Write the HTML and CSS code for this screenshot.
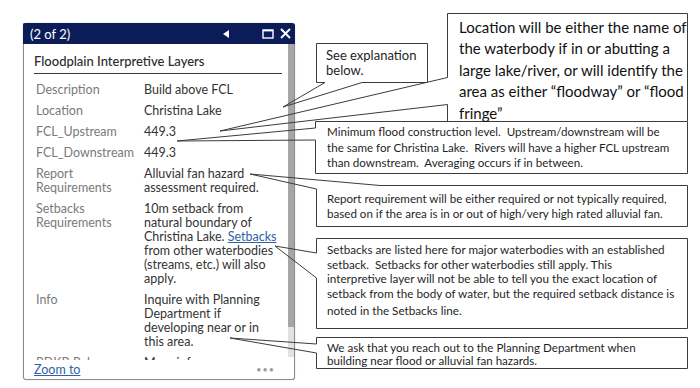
FILE: index.html
```html
<!DOCTYPE html>
<html lang="en">
<head>
<meta charset="utf-8">
<title>Floodplain Interpretive Layers</title>
<link rel="stylesheet" href="styles.css">
</head>
<body>
<div class="page">
  <div class="popup">
    <div class="pop-header">
      <span class="pop-count">(2 of 2)</span>
      <div class="pop-actions">
        <svg class="ico ico-prev" width="8" height="10" viewBox="0 0 8 10"><path d="M7 1 L1 5 L7 9 Z" fill="#fff"/></svg>
        <svg class="ico ico-max" width="12" height="10" viewBox="0 0 12 10"><rect x="1" y="1" width="10" height="8" fill="none" stroke="#fff" stroke-width="1.4"/><line x1="1" y1="1.6" x2="11" y2="1.6" stroke="#fff" stroke-width="1.6"/></svg>
        <svg class="ico ico-close" width="11" height="11" viewBox="0 0 11 11"><path d="M1 1 L10 10 M10 1 L1 10" stroke="#fff" stroke-width="1.9" fill="none"/></svg>
      </div>
    </div>
    <div class="pop-body">
      <div class="pop-scroll">
        <div class="pop-title">Floodplain Interpretive Layers</div>
        <dl class="fields">
          <dt>Description</dt><dd>Build above FCL</dd>
          <dt>Location</dt><dd>Christina Lake</dd>
          <dt>FCL_Upstream</dt><dd>449.3</dd>
          <dt>FCL_Downstream</dt><dd>449.3</dd>
          <dt>Report Requirements</dt><dd>Alluvial fan hazard assessment required.</dd>
          <dt>Setbacks Requirements</dt><dd>10m setback from natural boundary of Christina Lake. <a class="link" href="#">Setbacks</a> from other waterbodies (streams, etc.) will also apply.</dd>
          <dt>Info</dt><dd>Inquire with Planning Department if developing near or in this area.</dd>
          <dt>RDKB Rel</dt><dd>More info</dd>
        </dl>
      </div>
      <div class="scrollbar"><div class="thumb"></div><div class="track"></div></div>
    </div>
    <div class="pop-footer">
      <a class="link" href="#">Zoom to</a>
      <span class="more">&bull;&bull;&bull;</span>
    </div>
  </div>

  <div class="notes">
    <svg class="note-lines" width="700" height="388" viewBox="0 0 700 388">
      <rect x="447" y="13" width="241" height="108" fill="#fff"/>
      <path class="ln" d="M447.5,121 V104.5 L220,131 L447.5,77.5 V13.5 H687.5 V121"/>
      <rect x="316" y="43" width="112" height="40" fill="#fff"/>
      <path class="ln" d="M316.5,43.5 H427.5 V82.5 H362 L283,107 L325,82.5 H316.5 Z"/>
      <rect x="315" y="121" width="373" height="53" fill="#fff"/>
      <path class="ln" d="M315.5,128 L177,141 L315.5,140 V173.5 H687.5 V121.5 H315.5 Z"/>
      <rect x="316" y="185" width="372" height="42" fill="#fff"/>
      <path class="ln" d="M316.5,189 L250,174 L380,185.5 H687.5 V226.5 H316.5 Z"/>
      <rect x="316" y="238" width="372" height="91" fill="#fff"/>
      <path class="ln" d="M316.5,253 L275,246 L316.5,278 V328.5 H687.5 V238.5 H316.5 Z"/>
      <rect x="316" y="337" width="372" height="32" fill="#fff"/>
      <path class="ln" d="M316.5,344 L230,338 L316.5,353 V368.5 H687.5 V337.5 H316.5 Z"/>
    </svg>
    <div class="note note-a">See explanation<br>below.</div>
    <div class="note note-b">Location will be either the name of<br>the waterbody if in or abutting a<br>large lake/river, or will identify the<br>area as either &ldquo;floodway&rdquo; or &ldquo;flood<br>fringe&rdquo;</div>
    <div class="note note-c">Minimum flood construction level.&nbsp; Upstream/downstream will be<br>the same for Christina Lake.&nbsp; Rivers will have a higher FCL upstream<br>than downstream.&nbsp; Averaging occurs if in between.</div>
    <div class="note note-d">Report requirement will be either required or not typically required,<br>based on if the area is in or out of high/very high rated alluvial fan.</div>
    <div class="note note-e">Setbacks are listed here for major waterbodies with an established<br>setback.&nbsp; Setbacks for other waterbodies still apply. This<br>interpretive layer will not be able to tell you the exact location of<br>setback from the body of water, but the required setback distance is<br><span class="last">noted in the Setbacks line.</span></div>
    <div class="note note-f">We ask that you reach out to the Planning Department when<br>building near flood or alluvial fan hazards.</div>
  </div>
</div>
</body>
</html>
```

FILE: styles.css
```css
* { box-sizing: border-box; }
html, body { margin: 0; padding: 0; background: #fff; }
body { width: 700px; height: 388px; overflow: hidden; }

.page {
  position: relative;
  width: 700px;
  height: 388px;
  padding: 23px 0 0 23px;
  font-family: Lato, "Open Sans", sans-serif;
}

/* ---------- popup ---------- */
.popup {
  width: 272px;
  height: 357px;
  border: 1px solid #8c8c8c;
  border-top: none;
  border-radius: 2px 3px 3px 3px;
  background: #fff;
  display: flex;
  flex-direction: column;
  box-shadow: 0 0 2px rgba(0,0,0,0.15);
}
.pop-header {
  height: 21px;
  margin: 0 -1px;
  background: #0c1c58;
  color: #fff;
  display: flex;
  align-items: center;
  justify-content: space-between;
  padding: 0 4px 0 7px;
  border-radius: 2px 3px 0 0;
  font-size: 13px;
}
.pop-count { line-height: 20px; }
.pop-actions { display: flex; align-items: center; }
.ico { display: block; }
.ico-prev { margin-right: 32px; }
.ico-max { margin-right: 6px; }

.pop-body {
  height: 316px;
  display: flex;
}
.pop-scroll {
  flex: 1;
  overflow: hidden;
  padding: 8px 0 0 10px;
}
.pop-title {
  font-size: 13px;
  font-weight: 500;
  line-height: 18px;
  color: #2b2b2b;
  padding-bottom: 3px;
  border-bottom: 1px solid #3a3a3a;
  margin-right: 6px;
}
.fields {
  margin: 9px 0 0 0;
  padding-left: 2px;
  display: grid;
  grid-template-columns: 100px 134px;
  column-gap: 8px;
  row-gap: 7px;
  font-size: 12.5px;
  line-height: 14px;
}
.fields dt { color: #7a7a7a; margin: 0; }
.fields dd { color: #333; margin: 0; }
.link { color: #2f61a8; text-decoration: underline; }

.scrollbar {
  width: 6px;
  display: flex;
  flex-direction: column;
}
.thumb { height: 283px; background: #a6a6a6; }
.track { height: 30px; background: #e2e2e2; }

.pop-footer {
  height: 19px;
  display: flex;
  align-items: center;
  justify-content: space-between;
  padding: 0 19px 0 10px;
  font-size: 12.5px;
}
.more { color: #9b9b9b; font-size: 9px; letter-spacing: 1px; }

/* ---------- annotation callouts (free canvas) ---------- */
.notes {
  position: absolute;
  inset: 0;
  pointer-events: none;
}
.note-lines { position: absolute; left: 0; top: 0; }
.ln { fill: none; stroke: #3c3c3c; stroke-width: 1; }

.note {
  position: absolute;
  white-space: nowrap;
  color: #1f1f1f;
  font-family: Lato, "Open Sans", sans-serif;
}
.note-a { left: 326px; top: 48px; font-size: 13px; line-height: 15px; }
.note-b { left: 459px; top: 17px; font-size: 15px; line-height: 21.4px; color: #111; }
.note-c { left: 327px; top: 124px; font-size: 11.6px; line-height: 15.5px; }
.note-d { left: 327px; top: 191px; font-size: 11.6px; line-height: 15px; }
.note-e { left: 327px; top: 242px; font-size: 11.7px; line-height: 14.7px; }
.note-e .last { display: inline-block; margin-top: 2px; }
.note-f { left: 327px; top: 341px; font-size: 11.6px; line-height: 13px; }
```
